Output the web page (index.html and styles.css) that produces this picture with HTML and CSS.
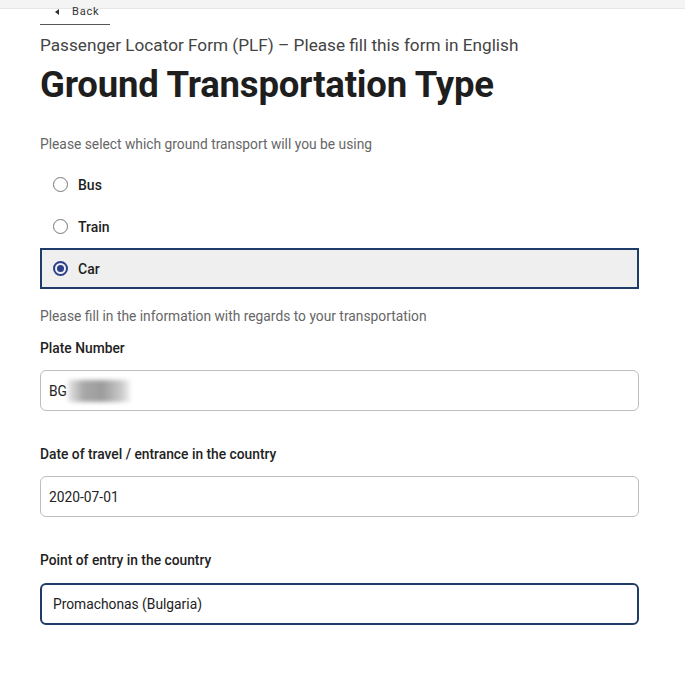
FILE: index.html
```html
<!DOCTYPE html>
<html>
<head>
<meta charset="utf-8">
<link rel="stylesheet" href="styles.css">
</head>
<body>
<div class="topbar"></div>
<main class="page">
  <a class="back"><span class="tri"></span>Back</a>
  <p class="sub">Passenger Locator Form (PLF) – Please fill this form in English</p>
  <h1 class="title">Ground Transportation Type</h1>
  <p class="hint first">Please select which ground transport will you be using</p>
  <div class="radios">
    <div class="radio"><span class="circle"></span><span class="rlabel">Bus</span></div>
    <div class="radio"><span class="circle"></span><span class="rlabel">Train</span></div>
    <div class="radio selected"><span class="circle on"></span><span class="rlabel">Car</span></div>
  </div>
  <p class="hint second">Please fill in the information with regards to your transportation</p>
  <div class="field">
    <div class="flabel">Plate Number</div>
    <div class="input">BG<span class="blur"></span></div>
  </div>
  <div class="field">
    <div class="flabel">Date of travel / entrance in the country</div>
    <div class="input">2020-07-01</div>
  </div>
  <div class="field">
    <div class="flabel">Point of entry in the country</div>
    <div class="input focus">Promachonas (Bulgaria)</div>
  </div>
</main>
</body>
</html>
```
FILE: styles.css
```css
* { box-sizing: border-box; }
html, body { margin: 0; padding: 0; background: #fff; }
body { font-family: Roboto, "Liberation Sans", sans-serif; color: #222; }
.topbar { height: 9px; background: #f4f4f4; border-bottom: 1px solid #e6e6e6; }
.page { padding: 0 46px 0 40px; display: flex; flex-direction: column; }
.back {
  display: flex; align-items: center; width: 70px; height: 19px; margin-top: -3px;
  padding-left: 15px; padding-bottom: 6px; font-size: 11px; line-height: 12px;
  letter-spacing: 0.8px; color: #333; border-bottom: 1px solid #555;
}
.tri { width: 0; height: 0; border-top: 3px solid transparent; border-bottom: 3px solid transparent; border-right: 4px solid #333; margin-right: 13px; }
.sub { margin: 9px 0 0; font-size: 17.2px; line-height: 22px; color: #444; }
.title { margin: 7px 0 0; font-size: 36.5px; line-height: 44px; font-weight: 700; color: #1e1e1e; letter-spacing: -0.2px; }
.hint { margin: 0; font-size: 13.8px; line-height: 18px; color: #666; }
.hint.first { margin-top: 28px; }
.radios { display: flex; flex-direction: column; gap: 1px; margin-top: 11px; }
.radio { display: flex; align-items: center; height: 41px; padding-left: 11px; border: 2px solid transparent; }
.radio.selected { background: #efefef; border-color: #1f3c68; }
.circle { width: 15px; height: 15px; border: 1.5px solid #777; border-radius: 50%; margin-right: 10px; display: flex; align-items: center; justify-content: center; }
.circle.on { border: 2px solid #2c3e8c; }
.circle.on::after { content: ""; width: 7px; height: 7px; border-radius: 50%; background: #2c3e8c; }
.rlabel { font-size: 14px; font-weight: 500; color: #1e1e1e; }
.hint.second { margin-top: 18px; }
.field { display: flex; flex-direction: column; }
.field + .field { margin-top: 34px; }
.hint.second + .field { margin-top: 14px; }
.flabel { font-size: 13.8px; line-height: 18px; font-weight: 500; color: #222; }
.input {
  margin-top: 13px; height: 41px; border: 1px solid #bdbdbd; border-radius: 6px;
  display: flex; align-items: center; padding-left: 8px; font-size: 13.8px; color: #222;
}
.input.focus { border: 2px solid #1f3c68; padding-left: 11px; margin-top: 14px; height: 42px; }
.blur { display: inline-block; width: 62px; height: 22px; margin-left: 1px; background: linear-gradient(90deg, #e6e6e6, #a8a8a8 25%, #9c9c9c 55%, #c8c8c8 85%, #f0f0f0); filter: blur(2px); }
```
